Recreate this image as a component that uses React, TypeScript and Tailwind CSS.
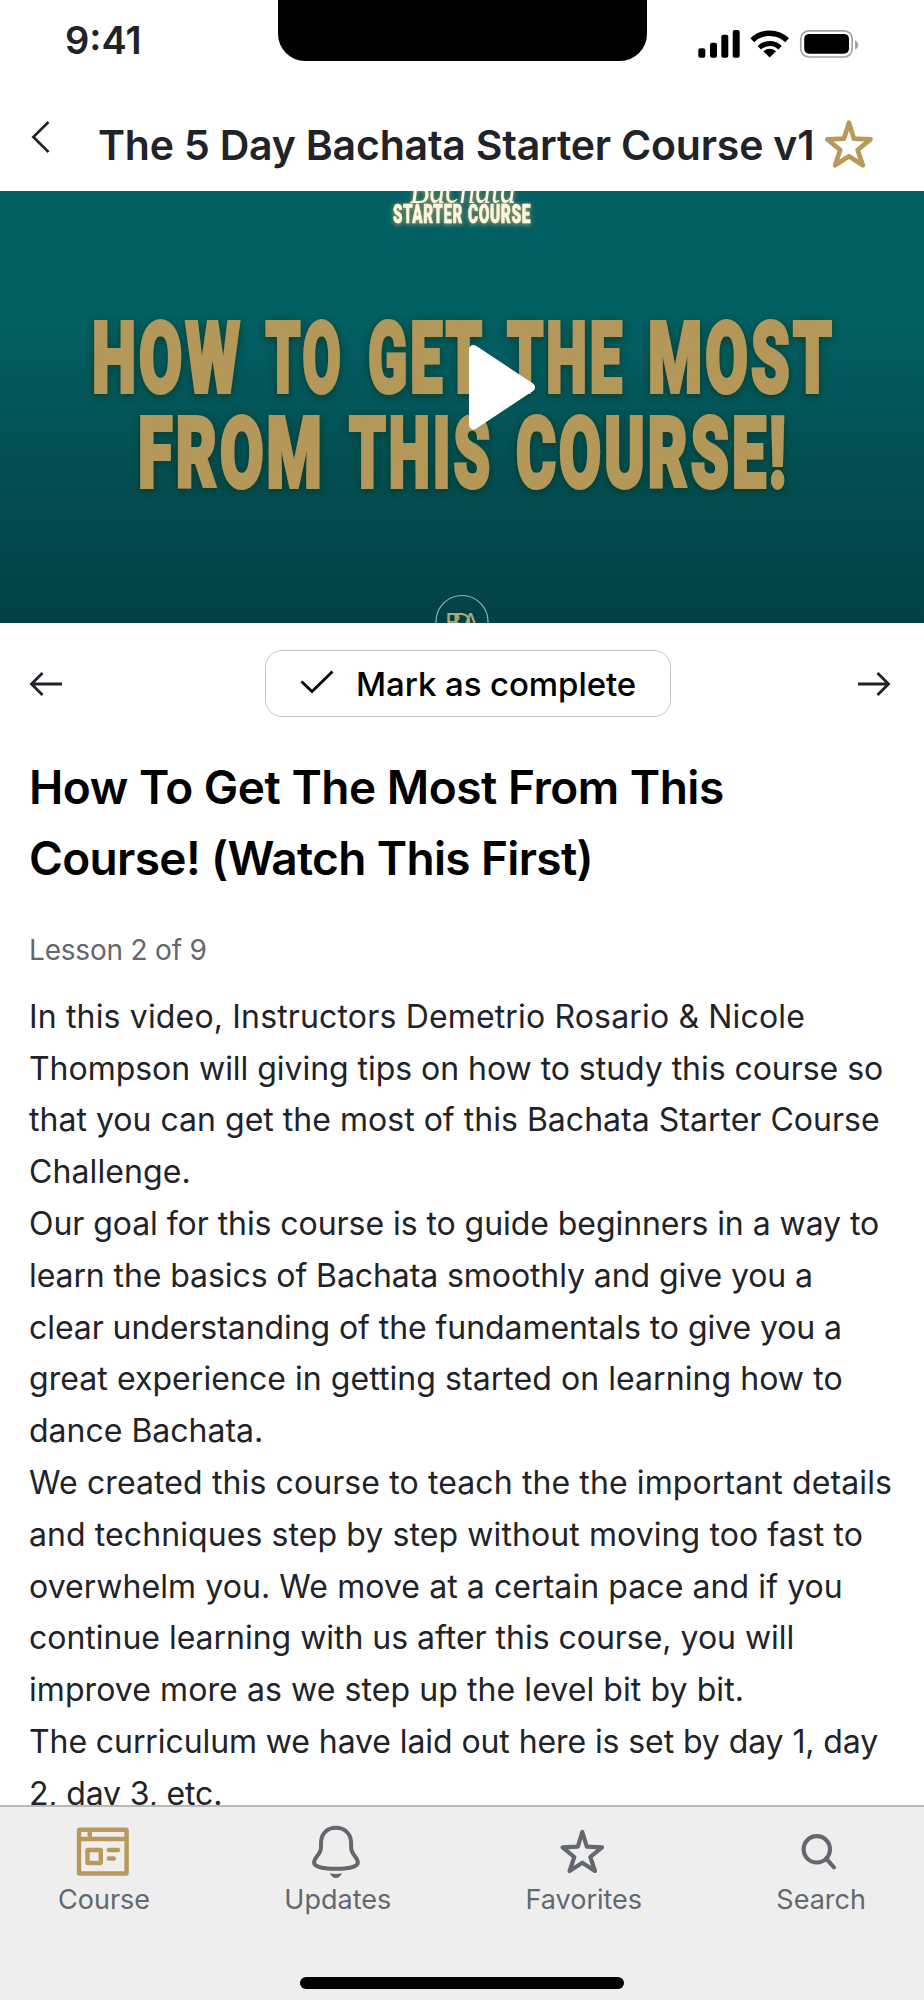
import React from 'react'

const lines = [
  { text: 'In this video, Instructors Demetrio Rosario & Nicole', tracking: 'tracking-[0.16px]' },
  { text: 'Thompson will giving tips on how to study this course so', tracking: 'tracking-[-0.04px]' },
  { text: 'that you can get the most of this Bachata Starter Course', tracking: 'tracking-[0.02px]' },
  { text: 'Challenge.', tracking: 'tracking-[0.1px]' },
  { text: 'Our goal for this course is to guide beginners in a way to', tracking: 'tracking-[-0.06px]' },
  { text: 'learn the basics of Bachata smoothly and give you a', tracking: 'tracking-[-0.09px]' },
  { text: 'clear understanding of the fundamentals to give you a', tracking: 'tracking-[-0.07px]' },
  { text: 'great experience in getting started on learning how to', tracking: 'tracking-[0.06px]' },
  { text: 'dance Bachata.', tracking: 'tracking-normal' },
  { text: 'We created this course to teach the the important details', tracking: 'tracking-[0.11px]' },
  { text: 'and techniques step by step without moving too fast to', tracking: 'tracking-[0.09px]' },
  { text: 'overwhelm you. We move at a certain pace and if you', tracking: 'tracking-[0.08px]' },
  { text: 'continue learning with us after this course, you will', tracking: 'tracking-[-0.02px]' },
  { text: 'improve more as we step up the level bit by bit.', tracking: 'tracking-[0.08px]' },
  { text: 'The curriculum we have laid out here is set by day 1, day', tracking: 'tracking-[-0.09px]' },
  { text: '2, day 3, etc.', tracking: 'tracking-[-0.15px]' },
]

// Headline words of the video cover
const words = [
  { text: 'HOW', x: 92, y: 392.3, width: 151 },
  { text: 'TO', x: 265.5, y: 392.3, width: 78 },
  { text: 'GET', x: 368, y: 392.3, width: 117 },
  { text: 'THE', x: 507, y: 392.3, width: 118 },
  { text: 'MOST', x: 648, y: 392.3, width: 187 },
  { text: 'FROM', x: 138, y: 487, width: 187 },
  { text: 'THIS', x: 349, y: 487, width: 144 },
  { text: 'COURSE!', x: 516, y: 487, width: 273 },
]

const starPath =
  'M28.3 12 L32.8 26.6 L48 27.3 L36.3 37 L41 51 L28.3 42.7 L15.6 51 L20.3 37 L8.6 27.3 L23.8 26.6 Z'

function VideoCover() {
  return (
    <svg className="block w-full h-[431.5px]" viewBox="0 191 924 431.5">
      <defs>
        <linearGradient id="cover" x1="0" y1="0" x2="0" y2="1">
          <stop offset="0" stopColor="#025f63" />
          <stop offset="0.3" stopColor="#025f63" />
          <stop offset="0.7" stopColor="#024c50" />
          <stop offset="1" stopColor="#014145" />
        </linearGradient>
        <filter id="shadow" x="-10%" y="-20%" width="120%" height="140%">
          <feDropShadow dx="0" dy="2" stdDeviation="4" floodColor="#12301f" floodOpacity="0.75" />
        </filter>
        <filter id="glow" x="-20%" y="-40%" width="140%" height="180%">
          <feDropShadow dx="0" dy="1" stdDeviation="2.5" floodColor="#c9a95e" floodOpacity="1" />
        </filter>
      </defs>
      <rect y="191" width="924" height="432" fill="url(#cover)" />
      {/* Course logo, cut by the top edge */}
      <g filter="url(#glow)" fill="#fdf6e0">
        <text
          x="410"
          y="203"
          textLength="106"
          lengthAdjust="spacingAndGlyphs"
          className="font-['Liberation_Serif',serif] text-[44px] italic"
        >
          Bachata
        </text>
        <g stroke="#fdf6e0" strokeWidth="0.6">
          <text
            x="393"
            y="223.2"
            textLength="70"
            lengthAdjust="spacingAndGlyphs"
            className="font-['Roboto',sans-serif] text-[25px] font-black tracking-[1px]"
          >
            STARTER
          </text>
          <text
            x="468"
            y="223.2"
            textLength="63"
            lengthAdjust="spacingAndGlyphs"
            className="font-['Roboto',sans-serif] text-[25px] font-black tracking-[1px]"
          >
            COURSE
          </text>
        </g>
      </g>
      {/* Headline */}
      <g filter="url(#shadow)" fill="#b4985a" stroke="#b4985a" strokeWidth="3.8">
        {words.map((w) => (
          <text
            key={w.text}
            x={w.x}
            y={w.y}
            textLength={w.width}
            lengthAdjust="spacingAndGlyphs"
            className="font-['Roboto',sans-serif] text-[99px] font-black tracking-[5px]"
          >
            {w.text}
          </text>
        ))}
      </g>
      {/* Academy badge */}
      <circle cx="462" cy="621.5" r="26" fill="none" stroke="#8fb5ad" strokeWidth="1.2" />
      <text
        x="445"
        y="631"
        textLength="34"
        className="font-['Lato',sans-serif] text-[25px]"
        fill="#a9a877"
      >
        BDA
      </text>
      {/* Play button */}
      <path
        d="M473.5 349.5 L530.5 387.3 L473.5 425 Z"
        fill="#fff"
        stroke="#fff"
        strokeWidth="9"
        strokeLinejoin="round"
      />
    </svg>
  )
}

export default function App() {
  return (
    <div className="w-[924px] h-[2000px] bg-white flex flex-col overflow-hidden font-['Inter',sans-serif] text-[#212328]">
      {/* Status Bar */}
      <div className="h-[90px] shrink-0 flex items-start">
        <div className="w-[277.5px] pl-[65px] pt-5 text-[38px] leading-[40px] font-semibold">9:41</div>
        <div className="w-[369.5px] h-[61px] bg-black rounded-b-[27px]"></div>
        <svg className="w-[180px] h-[50px] ml-[43px] mt-5" viewBox="0 0 180 50">
          <rect x="8.3" y="28.3" width="7" height="9.5" rx="2" />
          <rect x="20" y="22.7" width="7" height="15.1" rx="2" />
          <rect x="31.3" y="14.7" width="7" height="23.1" rx="2" />
          <rect x="42.7" y="10" width="7" height="27.8" rx="2" />
          <path d="M62.3 20.2 A25 25 0 0 1 97.1 20.2" fill="none" stroke="#000" strokeWidth="5.5" />
          <path d="M69.3 27.7 A15 15 0 0 1 90.1 27.7" fill="none" stroke="#000" strokeWidth="5" />
          <path d="M73.3 31.2 Q79.7 26.5 86.1 31.2 L79.7 37.5 Z" />
          <rect x="110.8" y="10.8" width="51.4" height="26.2" rx="8" fill="none" stroke="#a3a3a3" strokeWidth="1.7" />
          <rect x="114.2" y="13.9" width="44.8" height="19.8" rx="5" />
          <path d="M165 20.5 Q168.3 22 168.3 25 Q168.3 28 165 29.5 Z" fill="#a3a3a3" />
        </svg>
      </div>

      {/* Header */}
      <div className="h-[101px] shrink-0 flex items-start">
        <svg className="w-[97px] h-[80px]" viewBox="0 90 97 80">
          <path d="M48.5 122 L33.3 137 L48.5 152" fill="none" stroke="#212328" strokeWidth="2.6" />
        </svg>
        <h1 className="w-[728px] pt-[25px] pl-px text-[41px] leading-[60px] font-semibold tracking-[-0.2px] whitespace-nowrap">
          The 5 Day Bachata Starter Course v1
        </h1>
        <svg className="w-12 h-12 mt-[30px]" viewBox="6.5 9.5 43.7 44">
          <path d={starPath} fill="none" stroke="#b8995a" strokeWidth="4.3" strokeLinejoin="round" />
        </svg>
      </div>

      <VideoCover />

      {/* Lesson Navigation */}
      <div className="mt-[27.8px] h-[66.5px] shrink-0 flex items-center justify-between pl-[29px] pr-[33px]">
        <svg className="w-[34px] h-[26px]" viewBox="0 0 34 26" fill="none" stroke="#212328" strokeWidth="2.8">
          <path d="M33 13 H3 M13.5 2 L2.5 13 L13.5 24" />
        </svg>
        <button className="w-[406px] h-[66.5px] ml-4 border border-[#c4c4c6] rounded-[17px] flex items-center text-black">
          <svg className="w-[36px] h-[26px] ml-[33px] -mt-1.5" viewBox="0 0 36 26" fill="none" stroke="#000" strokeWidth="2.8">
            <path d="M2.5 13.5 L13 23.5 L33.5 3.5" />
          </svg>
          <span className="ml-[21px] mt-0.5 text-[33px] font-medium tracking-[-0.08px]">Mark as complete</span>
        </button>
        <svg className="w-[34px] h-[26px]" viewBox="0 0 34 26" fill="none" stroke="#212328" strokeWidth="2.8">
          <path d="M1 13 H31 M20.5 2 L31.5 13 L20.5 24" />
        </svg>
      </div>

      {/* Lesson Content */}
      <div className="flex-1 min-h-0 overflow-hidden pl-[29px]">
        <h2 className="mt-[35px] text-[46px] leading-[71.5px] font-semibold text-black whitespace-nowrap">
          <span className="block tracking-[-0.48px]">How To Get The Most From This</span>
          <span className="block tracking-[-0.65px]">Course! (Watch This First)</span>
        </h2>
        <p className="mt-[35px] text-[28px] leading-[40px] tracking-[-0.2px] text-[#63676e]">Lesson 2 of 9</p>
        <div className="mt-[21px] text-[32px] leading-[51.8px]">
          {lines.map((line) => (
            <p key={line.text} className={`whitespace-nowrap ${line.tracking}`}>
              {line.text}
            </p>
          ))}
        </div>
      </div>

      {/* Tab Bar */}
      <div className="h-[195px] shrink-0 bg-[#eeeeee] border-t-2 border-[#b9b9ba] flex flex-col items-center">
        <div className="w-full px-[58px] pt-[13px] h-[169.5px] flex items-start justify-between text-[27px] leading-[32px] text-[#63676e]">
          <div className="flex flex-col items-center gap-1">
            <svg className="w-[60px] h-[60px]" viewBox="0 0 60 60" fill="none" stroke="#b8995a" strokeWidth="4.4">
              <rect x="5" y="9.7" width="47.6" height="43.8" rx="0.5" />
              <path d="M5 19 H52 M15.8 9 V19" />
              <rect x="13.5" y="30" width="13.3" height="13" rx="0.5" />
              <path d="M34.8 30 H44 M34.8 38.5 H39.8" strokeLinecap="round" />
            </svg>
            <span>Course</span>
          </div>
          <div className="flex flex-col items-center gap-1">
            <svg className="w-[60px] h-[60px]" viewBox="0.7 0 60 60" fill="none" stroke="#63676e" strokeWidth="4">
              <path d="M13.7 23 C13.7 13.5 20 7.8 28.6 7.8 C37.2 7.8 43.8 13.5 43.8 23 V27 C43.8 35 50.5 37 50.5 42.5 C50.5 47 40 48.8 28.6 48.8 C17.2 48.8 6.8 47 6.8 42.5 C6.8 37 13.7 35 13.7 27 Z" />
              <path d="M22.5 53.3 Q28.6 54.8 34.8 53.3 Q32.5 58 28.6 58 Q24.7 58 22.5 53.3 Z" fill="#63676e" stroke="none" />
            </svg>
            <span>Updates</span>
          </div>
          <div className="flex flex-col items-center gap-1">
            <svg className="w-[60px] h-[60px]" viewBox="0 0 60 60">
              <path d={starPath} fill="none" stroke="#63676e" strokeWidth="4.2" strokeLinejoin="round" />
            </svg>
            <span>Favorites</span>
          </div>
          <div className="flex flex-col items-center gap-1">
            <svg className="w-[60px] h-[60px]" viewBox="0 0 60 60" fill="none" stroke="#63676e" strokeWidth="4.2">
              <circle cx="25.8" cy="29.3" r="13.2" />
              <path d="M35.2 38.7 L43 47.3" strokeLinecap="round" />
            </svg>
            <span>Search</span>
          </div>
        </div>
        <div className="w-[324px] h-3 bg-black rounded-full"></div>
      </div>
    </div>
  )
}
